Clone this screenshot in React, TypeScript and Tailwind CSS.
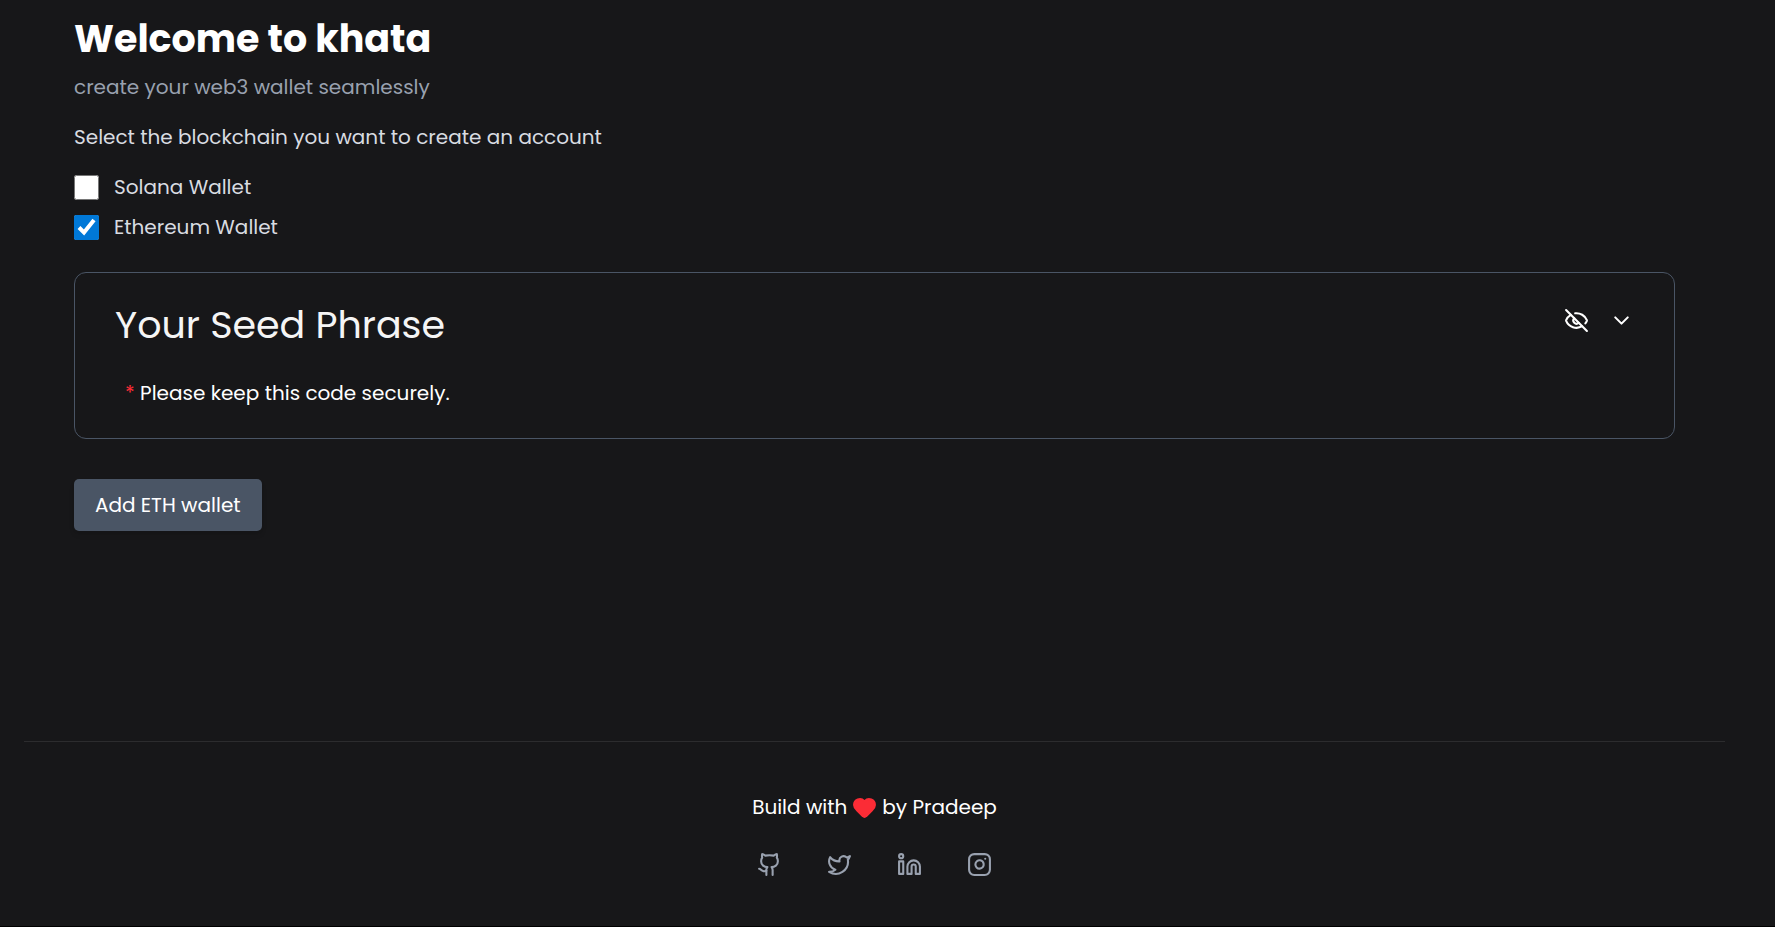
import { useState } from "react";
import { ChevronDown, EyeOff, Github, Heart, Instagram, Linkedin, Twitter } from "lucide-react";

const socials = [
  { label: "GitHub", Icon: Github },
  { label: "Twitter", Icon: Twitter },
  { label: "LinkedIn", Icon: Linkedin },
  { label: "Instagram", Icon: Instagram },
];

const chains = ["Solana Wallet", "Ethereum Wallet"];

export default function App() {
  const [selected, setSelected] = useState("Ethereum Wallet");

  return (
    <div className="flex min-h-screen flex-col border-b border-black bg-[#171719] pr-[50px] pl-6 font-['Poppins','Inter',sans-serif] text-[20px] leading-[30px] text-white">
      <main className="flex grow flex-col items-start px-[50px] pt-4">
        <h1 className="text-[38px] leading-[46px] font-bold">Welcome to khata</h1>
        <p className="mt-[10px] text-[#99a1af]">create your web3 wallet seamlessly</p>
        <p className="mt-5 text-[#d9dce1]">Select the blockchain you want to create an account</p>
        <div className="mt-5 flex flex-col gap-[10px] text-[#d9dce1]">
          {chains.map((chain) => (
            <label key={chain} className="flex items-center gap-[15px]">
              <input
                type="checkbox"
                checked={selected === chain}
                onChange={() => setSelected(chain)}
                className="size-[25px] accent-[#0078d7]"
              />
              {chain}
            </label>
          ))}
        </div>

        <section className="mt-[30px] w-full rounded-xl border border-[#4a5565] px-10 pt-[29px] pb-[30px]">
          <div className="flex items-start justify-between">
            <h2 className="text-[38px] leading-[45px] text-neutral-100">Your Seed Phrase</h2>
            <div className="flex gap-5 pt-[6px]">
              <button type="button" aria-label="Show seed phrase">
                <EyeOff size={25} />
              </button>
              <button type="button" aria-label="Expand seed phrase">
                <ChevronDown size={25} />
              </button>
            </div>
          </div>
          <p className="mt-[31px] px-[10px]">
            <span className="text-[#fb2c36]">*</span> Please keep this code securely.
          </p>
        </section>

        <button type="button" className="mt-10 rounded-[5px] bg-[#4a5565] px-[21px] py-[11px] shadow-md">
          Add ETH wallet
        </button>
      </main>

      <footer className="flex flex-col items-center border-t border-[#2c2c2e] pt-[50px] pb-[49px]">
        <p className="flex items-center gap-[5px]">
          Build with <Heart size={25} className="fill-[#fb2c36] text-[#fb2c36]" /> by Pradeep
        </p>
        <div className="mt-[30px] flex gap-[45px] text-[#99a1af]">
          {socials.map(({ label, Icon }) => (
            <a key={label} href="#" aria-label={label}>
              <Icon size={25} />
            </a>
          ))}
        </div>
      </footer>
    </div>
  );
}
